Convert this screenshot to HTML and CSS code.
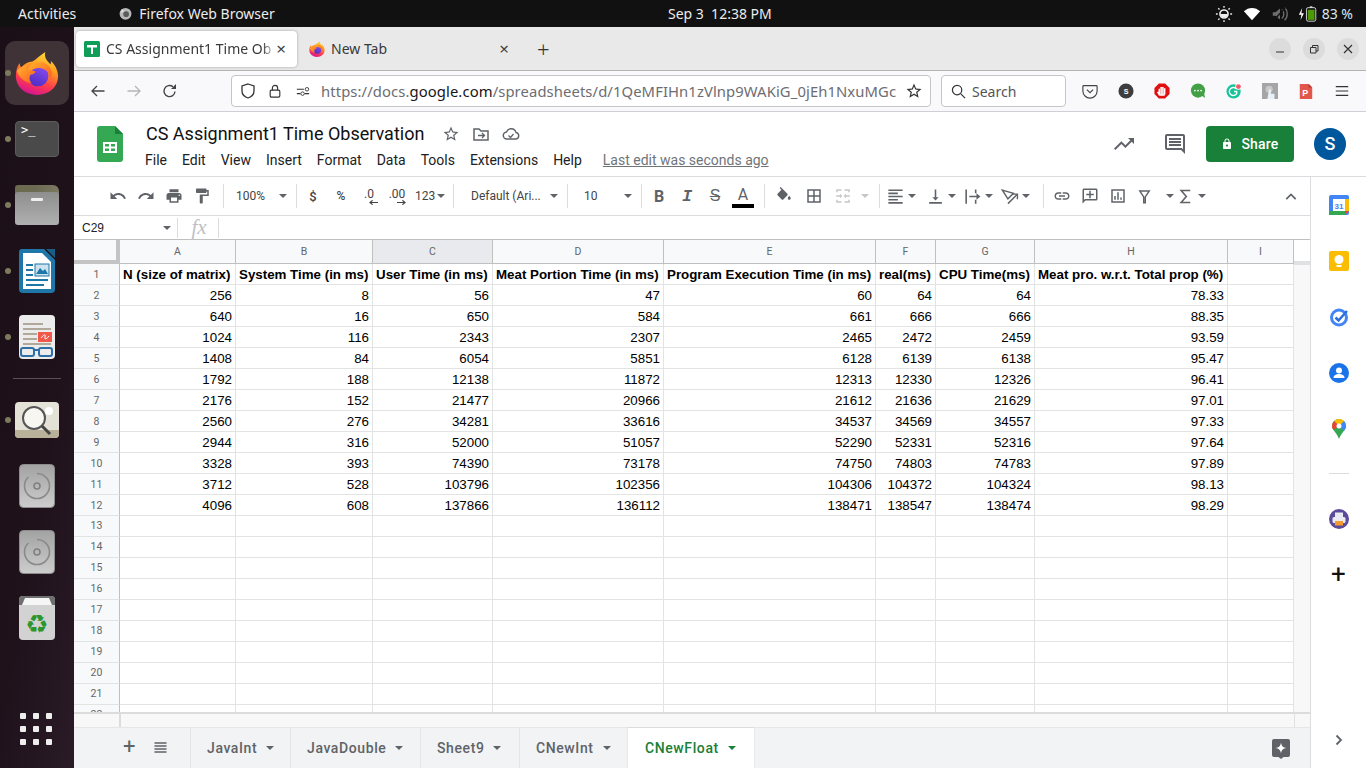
FILE: index.html
```html
<!DOCTYPE html>
<html lang="en">
<head>
<meta charset="utf-8">
<title>CS Assignment1 Time Observation</title>
<link rel="stylesheet" href="styles.css">
</head>
<body>
<svg class="sprite" xmlns="http://www.w3.org/2000/svg">
<defs>
<linearGradient id="fx1" x1=".75" y1="0" x2=".4" y2="1"><stop offset="0" stop-color="#ffe03d"/><stop offset=".38" stop-color="#ff9a1f"/><stop offset=".72" stop-color="#ff3a4e"/><stop offset="1" stop-color="#d5158f"/></linearGradient>
<linearGradient id="fx2" x1="0" y1="0" x2="1" y2="1"><stop offset="0" stop-color="#ffb52e"/><stop offset="1" stop-color="#ff5a1f"/></linearGradient>
<linearGradient id="fx3" x1=".7" y1="0" x2=".2" y2="1"><stop offset="0" stop-color="#8a4bf0"/><stop offset="1" stop-color="#4a2cc0"/></linearGradient>
<linearGradient id="dsk" x1="0" y1="0" x2="0" y2="1"><stop offset="0" stop-color="#a2a2a2"/><stop offset="1" stop-color="#cdcdcd"/></linearGradient>
</defs>
<symbol id="i-undo" viewBox="0 0 24 24"><path d="M12.5 8c-2.65 0-5.05.99-6.9 2.6L2 7v9h9l-3.62-3.62c1.39-1.16 3.16-1.88 5.12-1.88 3.54 0 6.55 2.31 7.6 5.5l2.37-.78C21.08 11.03 17.15 8 12.5 8z"/></symbol>
<symbol id="i-redo" viewBox="0 0 24 24"><path d="M18.4 10.6C16.55 8.99 14.15 8 11.5 8c-4.65 0-8.58 3.03-9.96 7.22L3.9 16c1.05-3.19 4.05-5.5 7.6-5.5 1.95 0 3.73.72 5.12 1.88L13 16h9V7l-3.6 3.6z"/></symbol>
<symbol id="i-print" viewBox="0 0 24 24"><path d="M19 8H5c-1.66 0-3 1.34-3 3v6h4v4h12v-4h4v-6c0-1.66-1.34-3-3-3zm-3 11H8v-5h8v5zm3-7c-.55 0-1-.45-1-1s.45-1 1-1 1 .45 1 1-.45 1-1 1zm-1-9H6v4h12V3z"/></symbol>
<symbol id="i-paint" viewBox="0 0 24 24"><path d="M18 4V3c0-.55-.45-1-1-1H5c-.55 0-1 .45-1 1v4c0 .55.45 1 1 1h12c.55 0 1-.45 1-1V6h1v4H9v11c0 .55.45 1 1 1h2c.55 0 1-.45 1-1v-9h8V4h-3z"/></symbol>
<symbol id="i-fill" viewBox="0 0 24 24"><path d="M16.56 8.94L7.62 0 6.21 1.41l2.38 2.38-5.15 5.15c-.59.59-.59 1.54 0 2.12l5.5 5.5c.29.29.68.44 1.06.44s.77-.15 1.06-.44l5.5-5.5c.59-.58.59-1.53 0-2.12zM19 11.5s-2 2.17-2 3.5c0 1.1.9 2 2 2s2-.9 2-2c0-1.33-2-3.5-2-3.5z"/></symbol>
<symbol id="i-borders" viewBox="0 0 24 24"><path d="M3 3v18h18V3H3zm8 16H5v-6h6v6zm0-8H5V5h6v6zm8 8h-6v-6h6v6zm0-8h-6V5h6v6z"/></symbol>
<symbol id="i-merge" viewBox="0 0 24 24"><path d="M3 3h7v2H5v2H3V3zm11 0h7v4h-2V5h-5V3zM3 17h2v2h5v2H3v-4zm16 0h2v4h-7v-2h5v-2zM3 11h5V9l3 3-3 3v-2H3v-2zm18 0h-5V9l-3 3 3 3v-2h5v-2z"/></symbol>
<symbol id="i-align" viewBox="0 0 24 24"><path d="M15 15H3v2h12v-2zm0-8H3v2h12V7zM3 13h18v-2H3v2zm0 8h18v-2H3v2zM3 3v2h18V3H3z"/></symbol>
<symbol id="i-valign" viewBox="0 0 24 24"><path d="M16 13h-3V3h-2v10H8l4 4 4-4zM4 19v2h16v-2H4z"/></symbol>
<symbol id="i-wrap" viewBox="0 0 24 24"><path d="M3 3h2v18H3V3zm12 0h2v5h-2V3zm0 13h2v5h-2v-5zM8 11h9V8l5 4-5 4v-3H8v-2z"/></symbol>
<symbol id="i-rotate" viewBox="0 0 24 24"><path d="M3 4l14 4-7 7L3 4z" fill="none" stroke="#5f6368" stroke-width="1.800"/><path d="M10 21L21 10M15.500 9H22v6.500" fill="none" stroke="#5f6368" stroke-width="1.800"/></symbol>
<symbol id="i-link" viewBox="0 0 24 24"><path d="M3.900 12c0-1.710 1.390-3.100 3.100-3.100h4V7H7c-2.760 0-5 2.240-5 5s2.240 5 5 5h4v-1.900H7c-1.710 0-3.100-1.390-3.100-3.100zM8 13h8v-2H8v2zm9-6h-4v1.900h4c1.710 0 3.100 1.390 3.100 3.100s-1.390 3.100-3.100 3.100h-4V17h4c2.760 0 5-2.240 5-5s-2.240-5-5-5z"/></symbol>
<symbol id="i-addc" viewBox="0 0 24 24"><path d="M22 4c0-1.100-.9-2-2-2H4c-1.100 0-2 .9-2 2v18l4-4h14c1.100 0 2-.9 2-2V4zM4 17.170V4h16v12H5.170L4 17.170zM13 5h-2v4H7v2h4v4h2v-4h4V9h-4z"/></symbol>
<symbol id="i-chart" viewBox="0 0 24 24"><path d="M9 17H7v-5h2v5zm4 0h-2V7h2v10zm4 0h-2v-3h2v3zm2 2H5V5h14v14zM21 3H3v18h18V3z"/></symbol>
<symbol id="i-filter" viewBox="0 0 24 24"><path d="M6 5h12l-5 7.500V20h-2v-7.500z" fill="none" stroke="#5f6368" stroke-width="1.800"/></symbol>
<symbol id="i-sigma" viewBox="0 0 24 24"><path d="M18 4.500H6.500L13 12l-6.500 7.500H18" fill="none" stroke="#5f6368" stroke-width="2"/></symbol>
<symbol id="i-msg" viewBox="0 0 24 24"><path d="M20 2H4c-1.100 0-2 .9-2 2v12c0 1.100.9 2 2 2h14l4 4V4c0-1.100-.9-2-2-2zm0 15.170L18.830 16H4V4h16v13.170zM6 12h12v2H6zm0-3h12v2H6zm0-3h12v2H6z"/></symbol>
<symbol id="i-trend" viewBox="0 0 24 24"><path d="M16 6l2.290 2.290-4.880 4.880-4-4L2 16.590 3.410 18l6-6 4 4 6.300-6.290L22 12V6z"/></symbol>
<symbol id="i-lock" viewBox="0 0 24 24"><path d="M18 8h-1V6c0-2.760-2.240-5-5-5S7 3.240 7 6v2H6c-1.100 0-2 .9-2 2v10c0 1.100.9 2 2 2h12c1.100 0 2-.9 2-2V10c0-1.100-.9-2-2-2zm-6 9c-1.100 0-2-.9-2-2s.9-2 2-2 2 .9 2 2-.9 2-2 2zm3-9H9V6c0-1.660 1.340-3 3-3s3 1.340 3 3v2z"/></symbol>
<symbol id="i-star" viewBox="0 0 24 24"><path d="M22 9.240l-7.190-.62L12 2 9.190 8.630 2 9.240l5.460 4.730L5.820 21 12 17.270 18.180 21l-1.630-7.030L22 9.240zM12 15.400l-3.760 2.270 1-4.280-3.320-2.880 4.380-.38L12 6.100l1.710 4.040 4.380.38-3.320 2.880 1 4.280L12 15.400z"/></symbol>
<symbol id="i-disc" viewBox="0 0 36 44"><rect x="0.500" y="0.500" width="35" height="43" rx="4" fill="url(#dsk)" stroke="#8c8c8c"/><path d="M18 9.500a12.500 12.500 0 1 1-12.500 12.500c0-4 1.500-7 4-9" fill="none" stroke="#8a8a8a" stroke-width="1.600"/><circle cx="18" cy="22" r="3" fill="none" stroke="#808080" stroke-width="1.600"/></symbol>
<symbol id="i-fox" viewBox="0 0 48 48"><path d="M33 1c-1.500 6 2 10 6 13.500.3-1 .3-2.500 0-4 5 4.500 8 11 8 17.500a23 20 0 0 1-46 0c0-7 1.500-11 4-15 .3 2.500 1 4 2 5 3-4 7-6 12-6.500C23 9 27 5 33 1z" fill="url(#fx1)"/><circle cx="25" cy="27" r="11.500" fill="url(#fx3)"/><path d="M13 21c2.500-6 8.500-9.500 15-9 6 .5 11 5 12 11 .5 3-.5 6-2 8.500.5-5-2-10-7-12-5-2-11-.5-14 3z" fill="url(#fx2)"/><path d="M2 22c3-4 8-7 14-7-2 1.500-3 3-3.500 4.500l9.500 2.500c1 1.500-1.500 3.500-5 3.500-2 3-1.500 7 1.500 10C10 34 4.500 29 2 22z" fill="url(#fx2)"/></symbol>
<symbol id="i-arrow" viewBox="0 0 8 4"><path d="M0 0h8L4 4z"/></symbol>
</svg>
<div class="topbar">
  <span class="activities">Activities</span>
  <span class="appname"><svg class="appglyph" viewBox="0 0 48 48"><circle cx="24" cy="25" r="19" fill="#b8b8b8"/><circle cx="26" cy="26" r="9" fill="#5a5a5a"/><path d="M12 10l8 6-10 6z" fill="#e4e4e4"/></svg>Firefox Web Browser</span>
  <span class="clock">Sep 3&nbsp;&nbsp;12:38 PM</span>
  <span class="status">
    <svg class="st-ic" viewBox="0 0 20 20"><circle cx="10" cy="10" r="4.500" fill="none" stroke="#eee" stroke-width="1.800"/><path d="M6 10a4 4 0 0 0 8 0z" fill="#eee"/><path d="M10 1v2M10 17v2M1 10h2M17 10h2M3.600 3.600l1.400 1.400M15 15l1.400 1.400M3.600 16.400L5 15M15 5l1.400-1.400" stroke="#eee" stroke-width="1.500"/></svg>
    <svg class="st-ic" viewBox="0 0 20 20"><path d="M1 7c5-5 13-5 18 0l-9 10z" fill="#fff"/></svg>
    <svg class="st-ic st-vol" viewBox="0 0 20 20"><path d="M2 8h3l5-4v12l-5-4H2z" fill="#6e6e6e"/><path d="M12 5c3 2 3 8 0 10M15 3c4 3 4 11 0 14" fill="none" stroke="#6e6e6e" stroke-width="1.500"/><path d="M3 17L16 3" stroke="#111" stroke-width="1.500"/></svg>
    <svg class="st-bat" viewBox="0 0 26 20"><path d="M5 3L1 11h3l-1 6 4-8H4z" fill="#fff"/><rect x="10" y="2.500" width="11" height="16" rx="2" fill="none" stroke="#eee"/><rect x="14" y="1" width="3" height="1.500" fill="#eee"/><rect x="11.500" y="5" width="8" height="12" fill="#4e9a06"/></svg>
    <span class="pct">83 %</span>
  </span>
</div>
<div class="desk">
  <nav class="dock">
    <div class="dock-item"><span class="fox-box"><svg class="fox-big"><use href="#i-fox"/></svg></span><i class="run"></i></div>
    <div class="dock-item"><span class="term">&gt;_</span><i class="run"></i></div>
    <div class="dock-item"><span class="folder"><span class="folder-tab"></span><span class="folder-front"><span class="folder-slot"></span></span></span><i class="run"></i></div>
    <div class="dock-item">
      <svg class="dk-doc" viewBox="0 0 36 44"><path d="M3 0h22l11 11v29a4 4 0 0 1-4 4H4a4 4 0 0 1-4-4V3a3 3 0 0 1 3-3z" fill="#1f76a8"/><path d="M4 4h19l9 9v27H4z" fill="#fff"/><path d="M27 0l9 0v9z" fill="#1a5d86"/><rect x="7" y="15" width="7" height="2" fill="#1f76a8"/><rect x="7" y="20" width="7" height="2" fill="#1f76a8"/><rect x="7" y="25" width="7" height="2" fill="#1f76a8"/><rect x="7" y="30" width="22" height="2" fill="#1f76a8"/><rect x="7" y="35" width="18" height="2" fill="#1f76a8"/><rect x="16" y="15" width="14" height="12" fill="#cfe3ef" stroke="#1f76a8"/><path d="M17 25l4-6 3 3 2-2 3 5z" fill="#1f76a8"/></svg><i class="run"></i></div>
    <div class="dock-item">
      <svg class="dk-doc" viewBox="0 0 36 44"><rect width="36" height="44" rx="4" fill="#ececec"/><rect x="4" y="8" width="20" height="2" fill="#b0a99a"/><rect x="4" y="13" width="28" height="2" fill="#b0a99a"/><rect x="4" y="18" width="14" height="2" fill="#b0a99a"/><rect x="4" y="23" width="14" height="2" fill="#b0a99a"/><rect x="4" y="28" width="28" height="2" fill="#b0a99a"/><rect x="19" y="17" width="14" height="10" fill="#f0584a"/><path d="M22 23c3-4 5-4 4-1s2 2 4-1" stroke="#fff" fill="none"/><rect x="2" y="33" width="13" height="8" rx="2" fill="none" stroke="#2f6fa8" stroke-width="2"/><rect x="20" y="33" width="13" height="8" rx="2" fill="none" stroke="#2f6fa8" stroke-width="2"/><path d="M15 35h5" stroke="#2f6fa8" stroke-width="2"/></svg><i class="run"></i></div>
    <div class="dock-sep"><span></span></div>
    <div class="dock-item">
      <svg class="dk-search" viewBox="0 0 44 36"><rect width="44" height="36" rx="4" fill="#e4e1d6"/><path d="M0 28h44v4a4 4 0 0 1-4 4H4a4 4 0 0 1-4-4z" fill="#b9b199"/><circle cx="19" cy="16" r="11" fill="#f7f6f1" stroke="#555" stroke-width="2"/><path d="M27 24l8 8" stroke="#444" stroke-width="3"/><circle cx="34" cy="9" r="4" fill="#fff"/></svg><i class="run"></i></div>
    <div class="dock-item"><svg class="dk-doc"><use href="#i-disc"/></svg></div>
    <div class="dock-item"><svg class="dk-doc"><use href="#i-disc"/></svg></div>
    <div class="dock-item">
      <svg class="dk-doc" viewBox="0 0 36 44"><rect width="36" height="44" rx="4" fill="#d2d2d2"/><path d="M0 4a4 4 0 0 1 4-4h28a4 4 0 0 1 4 4v5H0z" fill="#6f6f6f"/><path d="M3 9l3-7h24l3 7z" fill="#f6f6f6"/><text class="recycle" x="18" y="37" text-anchor="middle">♻</text></svg></div>
    <div class="apps"><i></i><i></i><i></i><i></i><i></i><i></i><i></i><i></i><i></i></div>
  </nav>
  <div class="browser">
    <div class="tabbar">
      <div class="tab active">
        <svg class="fav" viewBox="0 0 16 16"><rect width="16" height="16" rx="1.500" fill="#0f9d58"/><path d="M3 4h10v2.500H9V13H7V6.500H3z" fill="#fff"/></svg>
        <span class="tab-title">CS Assignment1 Time Ob</span>
        <span class="tab-x">×</span>
      </div>
      <div class="tab">
        <svg class="fav"><use href="#i-fox"/></svg>
        <span class="tab-title2">New Tab</span>
        <span class="tab-x">×</span>
      </div>
      <span class="newtab">+</span>
      <div class="winctl">
        <span class="wbtn"><svg viewBox="0 0 12 12"><path d="M2 9h8" stroke="#333" stroke-width="1"/></svg></span>
        <span class="wbtn"><svg viewBox="0 0 12 12"><path d="M2.500 4.500h5.500v5.500H2.500zM4.500 4.500V2.500H10v5.500H8" fill="none" stroke="#333"/></svg></span>
        <span class="wbtn"><svg viewBox="0 0 12 12"><path d="M2 2l8 8M10 2l-8 8" stroke="#333" stroke-width="1.200"/></svg></span>
      </div>
    </div>
    <div class="navbar">
      <svg class="nav-ic nav-back" viewBox="0 0 16 16"><path d="M14.500 8H2M7 3L2 8l5 5" fill="none" stroke="#444" stroke-width="1.300"/></svg>
      <svg class="nav-ic nav-fwd" viewBox="0 0 16 16"><path d="M1.500 8H14M9 3l5 5-5 5" fill="none" stroke="#b5b5b7" stroke-width="1.300"/></svg>
      <svg class="nav-ic nav-rel" viewBox="0 0 16 16"><path d="M13 8.500A5.500 5.500 0 1 1 11 3.800" fill="none" stroke="#444" stroke-width="1.400"/><path d="M14 1v5h-5z" fill="#444"/></svg>
      <div class="urlbox">
        <svg class="url-ic" viewBox="0 0 16 16"><path d="M8 1l6 2v5c0 4-3 6-6 7-3-1-6-3-6-7V3z" fill="none" stroke="#333" stroke-width="1.300"/></svg>
        <svg class="url-ic" viewBox="0 0 16 16"><rect x="2.500" y="7" width="11" height="8" rx="1.500" fill="none" stroke="#333" stroke-width="1.300"/><path d="M5 7V4.500a3 3 0 0 1 6 0V7" fill="none" stroke="#333" stroke-width="1.300"/></svg>
        <svg class="url-ic url-ic3" viewBox="0 0 16 16"><path d="M1 6h8M1 11h4M10 11h5" stroke="#333" stroke-width="1.200"/><circle cx="12.500" cy="6" r="2" fill="none" stroke="#333"/><circle cx="7.500" cy="11" r="2" fill="none" stroke="#333"/></svg>
        <span class="url"><span class="url-d">https://docs.</span><span class="url-b">google.com</span><span class="url-d">/spreadsheets/d/1QeMFIHn1zVlnp9WAKiG_0jEh1NxuMGc</span></span>
        <svg class="url-star" viewBox="0 0 24 24"><use href="#i-star"/></svg>
      </div>
      <div class="searchbox">
        <svg class="url-ic2" viewBox="0 0 16 16"><circle cx="6.500" cy="6.500" r="5" fill="none" stroke="#333" stroke-width="1.300"/><path d="M10.500 10.500L15 15" stroke="#333" stroke-width="1.300"/></svg>
        <span>Search</span>
      </div>
      <div class="exts">
        <svg viewBox="0 0 18 18"><path d="M2 3h14a1 1 0 0 1 1 1v5a8 8 0 0 1-16 0V4a1 1 0 0 1 1-1z" fill="none" stroke="#444" stroke-width="1.300"/><path d="M5.500 7.500L9 11l3.500-3.500" fill="none" stroke="#444" stroke-width="1.300"/></svg>
        <svg viewBox="0 0 18 18"><circle cx="9" cy="9" r="8.500" fill="#3d3d3d"/><text class="ext-s" x="9" y="12.500" text-anchor="middle">S</text></svg>
        <svg viewBox="0 0 18 18"><path d="M5.500 0.500h7l5 5v7l-5 5h-7l-5-5v-7z" fill="#e01010"/><path d="M6 14V6.500M8 13V4.500M10 13V4.500M12 13V6M6 13l-2-3M6 13.500h6" stroke="#fff" stroke-width="1.700" fill="none"/></svg>
        <svg viewBox="0 0 18 18"><circle cx="9" cy="8.500" r="8" fill="#43a047"/><path d="M13 14l4 3-1-5z" fill="#43a047"/><circle cx="5.500" cy="8.500" r="1" fill="#fff"/><circle cx="9" cy="8.500" r="1" fill="#fff"/><circle cx="12.500" cy="8.500" r="1" fill="#fff"/></svg>
        <svg viewBox="0 0 18 18"><circle cx="8.500" cy="9.500" r="8" fill="#15c39a"/><path d="M12 7a4.500 4.500 0 1 0 0 5V9.500H9" fill="none" stroke="#fff" stroke-width="1.600"/><circle cx="14" cy="4" r="3.500" fill="#fff"/><circle cx="14" cy="4" r="2.700" fill="#ef5b6b"/></svg>
        <svg viewBox="0 0 18 18"><rect width="18" height="18" fill="#a5a5a5"/><circle cx="8" cy="7" r="4" fill="#c8c8c8"/><path d="M8 7h2v5h4v6H6z" fill="#e8f0f8"/></svg>
        <svg viewBox="0 0 18 18"><path d="M2 1h10l4 4v13H2z" fill="#e2574c"/><path d="M12 1l4 4h-4z" fill="#b53629"/><text class="ext-p" x="8" y="15" text-anchor="middle">P</text></svg>
        <svg viewBox="0 0 18 18"><path d="M2 4h14M2 9h14M2 14h14" stroke="#333" stroke-width="1.300"/></svg>
      </div>
    </div>
    <header class="docs-head">
      <svg class="sheets-logo" viewBox="0 0 26 36"><path d="M3 0h15l8 8v25a3 3 0 0 1-3 3H3a3 3 0 0 1-3-3V3a3 3 0 0 1 3-3z" fill="#34a853"/><path d="M18 0l8 8h-8z" fill="#188038"/><path d="M6 16h14v11H6zm2 2v2.500h4V18zm6 0v2.500h4V18zM8 22.500V25h4v-2.500zm6 0V25h4v-2.500z" fill="#fff" fill-rule="evenodd"/></svg>
      <div class="docs-titles">
        <div class="title-row">
          <span class="doc-title">CS Assignment1 Time Observation</span>
          <svg class="t-ic"><use href="#i-star"/></svg>
          <svg class="t-ic t-nobox" viewBox="0 0 18 18"><path d="M2 4h5l2 2h7v9H2z" fill="none" stroke="#5f6368" stroke-width="1.500"/><path d="M6 10.500h6M10 8l2.500 2.500L10 13" fill="none" stroke="#5f6368" stroke-width="1.300"/></svg>
          <svg class="t-ic t-nobox" viewBox="0 0 18 18"><path d="M5 14a3.500 3.500 0 0 1-.5-7A5 5 0 0 1 14 7.500 3.300 3.300 0 0 1 14 14z" fill="none" stroke="#5f6368" stroke-width="1.400"/><path d="M6.500 10.500l2 2 3-3.500" fill="none" stroke="#5f6368" stroke-width="1.200"/></svg>
        </div>
        <div class="menu-row">
          <span>File</span><span>Edit</span><span>View</span><span>Insert</span><span>Format</span><span>Data</span><span>Tools</span><span>Extensions</span><span>Help</span><span class="last-edit">Last edit was seconds ago</span>
        </div>
      </div>
      <svg class="h-ic"><use href="#i-trend"/></svg>
      <svg class="h-ic h-msg"><use href="#i-msg"/></svg>
      <div class="share"><svg class="share-lock"><use href="#i-lock"/></svg>Share</div>
      <div class="avatar">S</div>
    </header>
    <div class="workspace">
      <div class="docs">
        <div class="toolbar">
          <div class="tg tg-hist">
            <span class="tb"><svg><use href="#i-undo"/></svg></span>
            <span class="tb"><svg><use href="#i-redo"/></svg></span>
            <span class="tb"><svg><use href="#i-print"/></svg></span>
            <span class="tb"><svg><use href="#i-paint"/></svg></span>
          </div>
          <div class="tg tg-zoom"><span class="sel-t">100%</span><svg class="ar ar-end"><use href="#i-arrow"/></svg></div>
          <div class="tg tg-num">
            <span class="tb tb-t">$</span>
            <span class="tb tb-t tb-s">%</span>
            <span class="tb tb-dec">.0<svg viewBox="0 0 10 5"><path d="M10 2.500H2M4 0L1 2.500 4 5" fill="none" stroke="#444" stroke-width="1.200"/></svg></span>
            <span class="tb tb-dec">.00<svg viewBox="0 0 10 5"><path d="M0 2.500h8M6 0l3 2.500L6 5" fill="none" stroke="#444" stroke-width="1.200"/></svg></span>
            <span class="tb-123">123<svg class="ar"><use href="#i-arrow"/></svg></span>
          </div>
          <div class="tg tg-font"><span class="sel-t">Default (Ari...</span><svg class="ar ar-end"><use href="#i-arrow"/></svg></div>
          <div class="tg tg-size"><span class="sel-t">10</span><svg class="ar ar-end"><use href="#i-arrow"/></svg></div>
          <div class="tg tg-text">
            <span class="tb tb-b">B</span>
            <span class="tb tb-i">I</span>
            <span class="tb tb-u">S</span>
            <span class="tb tb-a">A</span>
          </div>
          <div class="tg tg-cell">
            <span class="tb tb30"><svg><use href="#i-fill"/></svg></span>
            <span class="tb tb30"><svg><use href="#i-borders"/></svg></span>
            <span class="tb tb-off"><svg><use href="#i-merge"/></svg></span>
            <svg class="ar ar-off"><use href="#i-arrow"/></svg>
          </div>
          <div class="tg tg-align">
            <span class="cb cb40"><svg class="cb-i"><use href="#i-align"/></svg><svg class="ar"><use href="#i-arrow"/></svg></span>
            <span class="cb cb37"><svg class="cb-i"><use href="#i-valign"/></svg><svg class="ar"><use href="#i-arrow"/></svg></span>
            <span class="cb cb37"><svg class="cb-i"><use href="#i-wrap"/></svg><svg class="ar"><use href="#i-arrow"/></svg></span>
            <span class="cb cb37"><svg class="cb-i"><use href="#i-rotate"/></svg><svg class="ar"><use href="#i-arrow"/></svg></span>
          </div>
          <div class="tg tg-ins">
            <span class="tb"><svg><use href="#i-link"/></svg></span>
            <span class="tb"><svg><use href="#i-addc"/></svg></span>
            <span class="tb"><svg><use href="#i-chart"/></svg></span>
            <span class="cb cb-filter"><svg class="cb-i"><use href="#i-filter"/></svg><svg class="ar ar-far"><use href="#i-arrow"/></svg></span>
            <span class="cb cb-sum"><svg class="cb-i"><use href="#i-sigma"/></svg><svg class="ar"><use href="#i-arrow"/></svg></span>
          </div>
          <svg class="collapse" viewBox="0 0 14 8"><path d="M1.500 7L7 1.500 12.500 7" fill="none" stroke="#5f6368" stroke-width="2"/></svg>
        </div>
        <div class="formula">
          <span class="namebox">C29</span><svg class="ar"><use href="#i-arrow"/></svg>
          <span class="f-sep f-sep1"></span><span class="fx">fx</span><span class="f-sep"></span>
        </div>
        <div class="sheet">
          <div class="grid-clip">
            <table class="grid">
              <colgroup><col class="c0"><col class="ca"><col class="cb-w"><col class="cc"><col class="cd"><col class="ce"><col class="cf"><col class="cg"><col class="ch"><col class="ci"></colgroup>
              <thead><tr><th class="corner"></th><th>A</th><th>B</th><th class="selcol">C</th><th>D</th><th>E</th><th>F</th><th>G</th><th>H</th><th>I</th></tr></thead>
              <tbody>
                <tr class="hdr"><th>1</th><td>N (size of matrix)</td><td>System Time (in ms)</td><td>User Time (in ms)</td><td>Meat Portion Time (in ms)</td><td>Program Execution Time (in ms)</td><td>real(ms)</td><td>CPU Time(ms)</td><td>Meat pro. w.r.t. Total prop (%)</td><td></td></tr>
                <tr><th>2</th><td>256</td><td>8</td><td>56</td><td>47</td><td>60</td><td>64</td><td>64</td><td>78.33</td><td></td></tr>
                <tr><th>3</th><td>640</td><td>16</td><td>650</td><td>584</td><td>661</td><td>666</td><td>666</td><td>88.35</td><td></td></tr>
                <tr><th>4</th><td>1024</td><td>116</td><td>2343</td><td>2307</td><td>2465</td><td>2472</td><td>2459</td><td>93.59</td><td></td></tr>
                <tr><th>5</th><td>1408</td><td>84</td><td>6054</td><td>5851</td><td>6128</td><td>6139</td><td>6138</td><td>95.47</td><td></td></tr>
                <tr><th>6</th><td>1792</td><td>188</td><td>12138</td><td>11872</td><td>12313</td><td>12330</td><td>12326</td><td>96.41</td><td></td></tr>
                <tr><th>7</th><td>2176</td><td>152</td><td>21477</td><td>20966</td><td>21612</td><td>21636</td><td>21629</td><td>97.01</td><td></td></tr>
                <tr><th>8</th><td>2560</td><td>276</td><td>34281</td><td>33616</td><td>34537</td><td>34569</td><td>34557</td><td>97.33</td><td></td></tr>
                <tr><th>9</th><td>2944</td><td>316</td><td>52000</td><td>51057</td><td>52290</td><td>52331</td><td>52316</td><td>97.64</td><td></td></tr>
                <tr><th>10</th><td>3328</td><td>393</td><td>74390</td><td>73178</td><td>74750</td><td>74803</td><td>74783</td><td>97.89</td><td></td></tr>
                <tr><th>11</th><td>3712</td><td>528</td><td>103796</td><td>102356</td><td>104306</td><td>104372</td><td>104324</td><td>98.13</td><td></td></tr>
                <tr><th>12</th><td>4096</td><td>608</td><td>137866</td><td>136112</td><td>138471</td><td>138547</td><td>138474</td><td>98.29</td><td></td></tr>
                <tr class="blank"><th>13</th><td></td><td></td><td></td><td></td><td></td><td></td><td></td><td></td><td></td></tr>
                <tr class="blank"><th>14</th><td></td><td></td><td></td><td></td><td></td><td></td><td></td><td></td><td></td></tr>
                <tr class="blank"><th>15</th><td></td><td></td><td></td><td></td><td></td><td></td><td></td><td></td><td></td></tr>
                <tr class="blank"><th>16</th><td></td><td></td><td></td><td></td><td></td><td></td><td></td><td></td><td></td></tr>
                <tr class="blank"><th>17</th><td></td><td></td><td></td><td></td><td></td><td></td><td></td><td></td><td></td></tr>
                <tr class="blank"><th>18</th><td></td><td></td><td></td><td></td><td></td><td></td><td></td><td></td><td></td></tr>
                <tr class="blank"><th>19</th><td></td><td></td><td></td><td></td><td></td><td></td><td></td><td></td><td></td></tr>
                <tr class="blank"><th>20</th><td></td><td></td><td></td><td></td><td></td><td></td><td></td><td></td><td></td></tr>
                <tr class="blank"><th>21</th><td></td><td></td><td></td><td></td><td></td><td></td><td></td><td></td><td></td></tr>
                <tr class="blank"><th>22</th><td></td><td></td><td></td><td></td><td></td><td></td><td></td><td></td><td></td></tr>
              </tbody>
            </table>
            <div class="vscroll"><div class="vscroll-top"></div><div class="vscroll-mark"></div></div>
          </div>
          <div class="hscroll"><span class="hs-stub"></span><span class="hs-fill"></span><span class="hs-end"></span></div>
          <div class="sheet-tabs">
            <span class="st-add">+</span>
            <svg class="st-all" viewBox="0 0 12 12"><path d="M0 1h12M0 4h12M0 7h12M0 10h12" stroke="#5f6368" stroke-width="1.500"/></svg>
            <div class="stab stab1">JavaInt<svg class="ar"><use href="#i-arrow"/></svg></div>
            <div class="stab stab2">JavaDouble<svg class="ar"><use href="#i-arrow"/></svg></div>
            <div class="stab stab3">Sheet9<svg class="ar"><use href="#i-arrow"/></svg></div>
            <div class="stab stab4">CNewInt<svg class="ar"><use href="#i-arrow"/></svg></div>
            <div class="stab stab-on">CNewFloat<svg class="ar"><use href="#i-arrow"/></svg></div>
            <svg class="explore" viewBox="0 0 18 20"><path d="M2 0h14a2 2 0 0 1 2 2v14a2 2 0 0 1-2 2h-4.500L9 20l-2.500-2H2a2 2 0 0 1-2-2V2a2 2 0 0 1 2-2z" fill="#5f6368"/><path d="M9 3.500c.5 3.500 2 5 5.500 5.500-3.500.5-5 2-5.500 5.500-.5-3.500-2-5-5.500-5.500 3.500-.5 5-2 5.500-5.500z" fill="#fff"/></svg>
          </div>
        </div>
      </div>
      <aside class="side">
        <svg class="side-ic" viewBox="0 0 20 20"><rect width="20" height="20" rx="2" fill="#4285f4"/><rect x="4" y="4" width="12" height="12" fill="#fff"/><rect x="16" y="4" width="4" height="12" fill="#fbbc04"/><rect y="16" width="16" height="4" fill="#34a853"/><path d="M16 16h4l-4 4z" fill="#ea4335"/><text class="cal-t" x="10" y="14" text-anchor="middle">31</text></svg>
        <svg class="side-ic" viewBox="0 0 20 20"><rect width="20" height="20" rx="2" fill="#fbbc04"/><circle cx="10" cy="8.500" r="4.500" fill="#fff"/><rect x="7.500" y="14" width="5" height="2" fill="#fff"/></svg>
        <svg class="side-ic" viewBox="0 0 20 20"><circle cx="10" cy="10.500" r="7.500" fill="none" stroke="#4285f4" stroke-width="3"/><path d="M6.500 10.500l3 3L18 4" fill="none" stroke="#2b6fe0" stroke-width="2.500"/></svg>
        <svg class="side-ic" viewBox="0 0 20 20"><circle cx="10" cy="10" r="10" fill="#1a73e8"/><circle cx="10" cy="7.500" r="3" fill="#fff"/><path d="M4.500 15c0-3 3-4 5.500-4s5.500 1 5.500 4z" fill="#fff"/></svg>
        <svg class="side-ic" viewBox="0 0 20 20"><path d="M10 0a7 7 0 0 1 7 7c0 4-5 7-7 13-2-6-7-9-7-13a7 7 0 0 1 7-7z" fill="#34a853"/><path d="M5 2L15 12c1.500-2 2-3.500 2-5a7 7 0 0 0-2-5z" fill="#4285f4"/><path d="M10 0a7 7 0 0 1 5 2l-5 5-5-5a7 7 0 0 1 5-2z" fill="#fbbc04"/><path d="M5 2a7 7 0 0 0-2 5c0 1.500.5 2.500 1.500 4L10 7z" fill="#ea4335"/><circle cx="10" cy="7" r="2.500" fill="#fff"/></svg>
        <span class="side-sep"></span>
        <svg class="side-ic side-pr" viewBox="0 0 20 20"><circle cx="10" cy="10" r="10" fill="#5b4b9a"/><rect x="6" y="3.500" width="8" height="5" fill="#e9eaf2"/><rect x="3.500" y="8" width="13" height="6" rx="1.500" fill="#e9eaf2"/><rect x="6" y="12" width="8" height="4.500" fill="#f39c2d"/></svg>
        <span class="side-plus">+</span>
        <svg class="side-chev" viewBox="0 0 8 12"><path d="M1.500 1.500L6 6l-4.500 4.500" fill="none" stroke="#5f6368" stroke-width="1.800"/></svg>
      </aside>
    </div>
  </div>
</div>
</body>
</html>
```
FILE: styles.css
```css
* { box-sizing: border-box; }
html, body { margin: 0; padding: 0; height: 100%; }
body { width: 1366px; height: 768px; overflow: hidden; display: flex; flex-direction: column; font-family: Roboto, "Liberation Sans", sans-serif; background: #fff; }
.sprite { position: absolute; width: 0; height: 0; overflow: hidden; }
svg { display: block; flex: none; }

.topbar { height: 27px; flex: none; background: #111; color: #ececec; display: flex; align-items: center; font: 14px "Noto Sans", sans-serif; position: relative; }
.activities { margin-left: 18px; }
.appname { margin-left: 42px; display: flex; align-items: center; }
.appglyph { width: 15px; height: 15px; margin-right: 6px; }
.clock { position: absolute; left: 668px; }
.status { margin-left: auto; display: flex; align-items: center; margin-right: 13px; }
.st-ic { width: 18px; height: 18px; margin-right: 10px; }
.st-vol { margin-right: 8px; }
.st-bat { width: 22px; height: 18px; margin-left: 1px; margin-right: 2px; }
.pct { color: #dfe7ef; }

.desk { flex: 1; display: flex; min-height: 0; }
.dock { width: 74px; flex: none; background: linear-gradient(100deg, #1b0f17 0%, #1f121b 60%, #2a1b27 100%); padding-top: 13px; display: flex; flex-direction: column; align-items: stretch; }
.dock-item { height: 66px; position: relative; display: flex; align-items: center; justify-content: center; }
.run { position: absolute; left: 5px; top: 30px; width: 6px; height: 6px; border-radius: 50%; background: #7d7b5e; }
.fox-box { width: 64px; height: 64px; border-radius: 10px; background: #3f3338; display: flex; align-items: center; justify-content: center; }
.fox-big { width: 44px; height: 44px; }
.term { width: 44px; height: 36px; border-radius: 4px; background: #4a4a4a; border: 1px solid #5c5c5c; color: #fff; font: 12px/14px "DejaVu Sans Mono", monospace; padding: 1px 0 0 5px; }
.folder { width: 44px; height: 40px; display: flex; flex-direction: column; position: relative; }
.folder-tab { height: 10px; background: linear-gradient(100deg, #6d6a52 45%, #7c7a62 100%); border-radius: 3px 6px 0 0; }
.folder-front { flex: 1; background: linear-gradient(#8e8e8e, #b0b0b0); border-radius: 3px; margin-top: -3px; display: flex; justify-content: center; padding-top: 6px; }
.folder-slot { width: 12px; height: 3px; background: #eee; border-radius: 1px; }
.dk-doc { width: 36px; height: 44px; }
.dk-search { width: 44px; height: 36px; }
.recycle { font: 26px "DejaVu Sans", sans-serif; fill: #2c962c; }
.dock-sep { height: 17px; display: flex; align-items: center; justify-content: center; }
.dock-sep span { width: 48px; height: 1px; background: #5b5058; }
.apps { margin-top: auto; margin-bottom: 23px; margin-left: 20px; width: 32px; display: grid; grid-template-columns: repeat(3, 6px); gap: 7px; }
.apps i { width: 6px; height: 6px; background: #eee; border-radius: 1px; }

.browser { flex: 1; display: flex; flex-direction: column; min-width: 0; }
.tabbar { height: 44px; flex: none; background: #e9e9e9; border-bottom: 1px solid #b4b4b4; display: flex; align-items: center; padding-left: 2px; font: 14px "Noto Sans", sans-serif; color: #3a3a3a; }
.tab { display: flex; align-items: center; height: 36px; border-radius: 4px; position: relative; }
.tab.active { width: 221px; background: #fff; box-shadow: 0 0 3px rgba(0,0,0,.3); padding-left: 8px; }
.tab:not(.active) { width: 220px; padding-left: 12px; }
.fav { width: 16px; height: 16px; margin-right: 6px; }
.tab-title { width: 170px; overflow: hidden; white-space: nowrap; -webkit-mask-image: linear-gradient(90deg, #000 92%, transparent); mask-image: linear-gradient(90deg, #000 92%, transparent); }
.tab-x { font-size: 17px; color: #444; width: 10px; text-align: center; }
.tab-title2 { width: 168px; }
.newtab { font-size: 22px; font-weight: 300; color: #333; margin-left: 20px; }
.winctl { margin-left: auto; margin-right: 7px; display: flex; gap: 12px; }
.wbtn { width: 22px; height: 22px; border-radius: 50%; background: #dcdcdc; display: flex; align-items: center; justify-content: center; }
.wbtn svg { width: 12px; height: 12px; }

.navbar { height: 41px; flex: none; background: #f9f9fb; border-bottom: 1px solid #cfcfd8; display: flex; align-items: center; }
.nav-ic { width: 16px; height: 16px; }
.nav-back { margin-left: 16px; }
.nav-fwd { margin-left: 20px; }
.nav-rel { margin-left: 20px; }
.urlbox { margin-left: 53px; width: 700px; height: 32px; background: #fff; border: 1px solid #c5c5c9; border-radius: 4px; display: flex; align-items: center; padding-left: 8px; }
.url-ic { width: 14px; height: 16px; margin-right: 14px; }
.url-ic:first-child { width: 16px; margin-right: 12px; }
.url-ic3 { margin-right: 11px; }
.url { width: 576px; overflow: hidden; white-space: nowrap; font: 14.8px "Noto Sans", sans-serif; letter-spacing: .1px; }
.url-d { color: #6d6d72; }
.url-b { color: #16161a; }
.url-star { width: 18px; height: 18px; margin-left: 8px; fill: #333; }
.searchbox { margin-left: 10px; width: 125px; height: 32px; background: #fff; border: 1px solid #c5c5c9; border-radius: 4px; display: flex; align-items: center; padding-left: 9px; font: 14px "Noto Sans", sans-serif; color: #555; }
.url-ic2 { width: 15px; height: 15px; margin-right: 6px; }
.exts { margin-left: 16px; display: flex; gap: 20px; }
.exts svg { width: 16px; height: 16px; }
.ext-s { font: bold 8px "Liberation Sans", sans-serif; fill: #fff; }
.ext-p { font: bold 10px "Liberation Sans", sans-serif; fill: #fff; }

.docs-head { height: 65px; flex: none; border-bottom: 1px solid #dadce0; display: flex; align-items: flex-start; padding-left: 23px; background: #fff; }
.sheets-logo { width: 26px; height: 36px; margin-top: 14px; }
.docs-titles { margin-left: 23px; width: 951px; flex: none; }
.title-row { display: flex; align-items: center; margin-top: 9px; height: 26px; }
.doc-title { font: 18px/24px Roboto, sans-serif; color: #111; width: 278px; white-space: nowrap; }
.t-ic { width: 18px; height: 18px; fill: #5f6368; margin-left: 18px; }
.t-ic.t-nobox { margin-left: 12px; }
.menu-row { display: flex; margin-top: 3px; font: 14px/20px Roboto, sans-serif; color: #202124; margin-left: -1px; }
.menu-row span { margin-right: 15px; }
.menu-row .last-edit { color: #70757a; text-decoration: underline; margin-left: 6px; margin-right: 0; }
.h-ic { width: 24px; height: 24px; fill: #5f6368; margin-top: 20px; margin-left: 15px; }
.h-msg { margin-left: 27px; }
.share { width: 88px; height: 36px; margin-left: 19px; margin-top: 14px; background: #188038; border-radius: 4px; color: #fff; font: 500 14px Roboto, sans-serif; display: flex; align-items: center; justify-content: center; letter-spacing: .2px; }
.share-lock { width: 12px; height: 12px; fill: #fff; margin-right: 8px; }
.avatar { width: 32px; height: 32px; margin-left: 20px; margin-top: 16px; border-radius: 50%; background: #01579b; color: #fff; font: 500 18px/32px Roboto, sans-serif; text-align: center; }

.workspace { flex: 1; display: flex; min-height: 0; }
.docs { flex: 1; min-width: 0; display: flex; flex-direction: column; }
.toolbar { height: 39px; flex: none; border-bottom: 1px solid #dadce0; display: flex; align-items: center; padding-left: 30px; background: #fff; }
.tg { height: 24px; display: flex; align-items: center; border-right: 1px solid #dadce0; flex: none; color: #444; }
.tb { width: 28px; height: 24px; display: flex; align-items: center; justify-content: center; flex: none; }
.tb svg { width: 18px; height: 18px; fill: #5f6368; }
.tg-hist { width: 120px; }
.tg-zoom { width: 73px; padding-left: 12px; }
.tg-num { width: 157px; padding-left: 2px; }
.tg-font { width: 114px; padding-left: 17px; }
.tg-size { width: 74px; padding-left: 16px; }
.tg-text { width: 123px; padding-left: 3px; }
.tg-cell { width: 115px; padding-left: 4px; }
.tg-align { width: 164px; padding-left: 6px; }
.tg-ins { border-right: 0; padding-left: 4px; }
.sel-t { font: 12px Roboto, sans-serif; color: #444; white-space: nowrap; }
.ar { width: 8px; height: 4px; fill: #5f6368; flex: none; }
.ar-end { margin-left: auto; margin-right: 9px; }
.tb-t { font: 500 13px Roboto, sans-serif; color: #444; }
.tb-s { font-size: 12px; }
.tb-dec { flex-direction: column; font: 12px/12px Roboto, sans-serif; color: #444; }
.tb-dec svg { width: 9px; height: 5px; margin-left: 9px; }
.tb-123 { width: 42px; font: 12px Roboto, sans-serif; display: flex; align-items: center; padding-left: 4px; gap: 2px; }
.tb-b { font: 700 16px Roboto, sans-serif; color: #5f6368; }
.tb-i { font: italic 700 17px "Liberation Mono", monospace; color: #5f6368; }
.tb-u { font: 16px "Liberation Sans", sans-serif; color: #5f6368; text-decoration: line-through; }
.tb-a { font: 16px/14px Roboto, sans-serif; color: #5f6368; border-bottom: 4px solid #000; height: 21px; width: 22px; margin-left: 3px; margin-top: 2px; }
.tb30 { width: 30px; }
.tb-off svg { fill: #c4c7c5; }
.ar-off { fill: #c4c7c5; margin-left: 4px; }
.cb { display: flex; align-items: center; flex: none; }
.cb40 { width: 40px; }
.cb37 { width: 37px; }
.cb-i { width: 19px; height: 19px; fill: #5f6368; margin-right: 3px; }
.cb-filter { width: 41px; margin-left: 3px; }
.ar-far { margin-left: 9px; }
.cb-sum { width: 40px; }
.collapse { width: 12px; height: 7px; margin-left: 69px; }

.formula { height: 24px; flex: none; border-bottom: 1px solid #c0c0c0; display: flex; align-items: center; padding-left: 8px; font: 12px "Liberation Sans", sans-serif; color: #222; background: #fff; }
.namebox { width: 81px; }
.f-sep { width: 1px; height: 20px; background: #dadce0; }
.f-sep1 { margin-left: 6px; }
.fx { font: italic 21px "Liberation Serif", serif; color: #bdc1c6; width: 40px; text-align: center; padding-left: 2px; }

.sheet { flex: 1; min-height: 0; display: flex; flex-direction: column; }
.grid-clip { flex: 1; min-height: 0; overflow: hidden; display: flex; }
.grid { border-collapse: separate; border-spacing: 0; table-layout: fixed; width: 1220px; flex: none; align-self: flex-start; font: 13.33px "Liberation Sans", sans-serif; color: #000; }
.c0 { width: 46px; } .ca { width: 116px; } .cb-w { width: 137px; } .cc { width: 120px; } .cd { width: 171px; } .ce { width: 212px; } .cf { width: 60px; } .cg { width: 99px; } .ch { width: 193px; } .ci { width: 66px; }
.grid thead th { height: 24px; background: #f8f9fa; border-right: 1px solid #c0c0c0; border-bottom: 1px solid #c0c0c0; font: 400 10.5px Roboto, sans-serif; color: #666; text-align: center; padding: 0; }
.grid thead th.corner { border-right: 4px solid #c4c4c4; border-bottom: 4px solid #c4c4c4; }
.grid thead th.selcol { background: #e8eaed; }
.grid tbody th { height: 21px; background: #f8f9fa; border-right: 1px solid #c0c0c0; border-bottom: 1px solid #e2e3e3; font: 400 10.5px Roboto, sans-serif; color: #666; text-align: center; padding: 0; }
.grid tbody .blank th { padding-bottom: 2px; }
.grid td { height: 21px; padding: 0 3px; border-right: 1px solid #e2e3e3; border-bottom: 1px solid #e2e3e3; text-align: right; white-space: nowrap; overflow: hidden; }
.grid .hdr td { text-align: left; font-weight: 700; }
.vscroll { flex: 1; background: #f8f8f8; display: flex; flex-direction: column; }
.vscroll-top { height: 22px; background: #fff; border-bottom: 1px solid #e0e0e0; }
.vscroll-mark { height: 3px; background: #dfe1e3; }
.hscroll { height: 16px; flex: none; border-top: 2px solid #dcdcdc; border-bottom: 1px solid #e6e6e6; background: #f8f8f8; display: flex; }
.hs-stub { width: 47px; border-right: 2px solid #dcdcdc; }
.hs-fill { flex: 1; }
.hs-end { width: 16px; border-left: 1px solid #e0e0e0; }
.sheet-tabs { height: 40px; flex: none; background: #f1f3f4; display: flex; align-items: stretch; position: relative; }
.st-add { width: 16px; margin-left: 49px; font: 22px/38px Roboto, sans-serif; color: #5f6368; }
.st-all { width: 13px; height: 12px; margin-left: 15px; margin-top: 14px; }
.stab { font: 500 14px/40px Roboto, sans-serif; color: #5f6368; display: flex; align-items: center; border-left: 1px solid #e3e5e7; letter-spacing: .6px; }
.stab .ar { margin-left: 9px; }
.stab1 { width: 100px; padding-left: 16px; margin-left: 23px; }
.stab2 { width: 130px; padding-left: 16px; }
.stab3 { width: 99px; padding-left: 16px; }
.stab4 { width: 109px; padding-left: 16px; }
.stab-on { width: 126px; padding-left: 17px; background: #fff; color: #188038; box-shadow: 0 0 1px rgba(0,0,0,.25); border-left: 0; }
.stab-on .ar { fill: #188038; }
.explore { width: 18px; height: 20px; margin-left: auto; margin-right: 20px; margin-top: 11px; }

.side { width: 56px; flex: none; border-left: 1px solid #dadce0; background: #fff; display: flex; flex-direction: column; align-items: center; padding-top: 18px; }
.side-ic { width: 20px; height: 20px; margin-bottom: 36px; }
.side-sep { width: 20px; height: 1px; background: #dadce0; margin-top: -2px; margin-bottom: 35px; }
.side-plus { font: 400 26px/26px Roboto, sans-serif; color: #111; margin-top: -4px; }
.side-chev { width: 8px; height: 12px; margin-top: auto; margin-bottom: 22px; }
.cal-t { font: bold 8px "Liberation Sans", sans-serif; fill: #4285f4; }
```
